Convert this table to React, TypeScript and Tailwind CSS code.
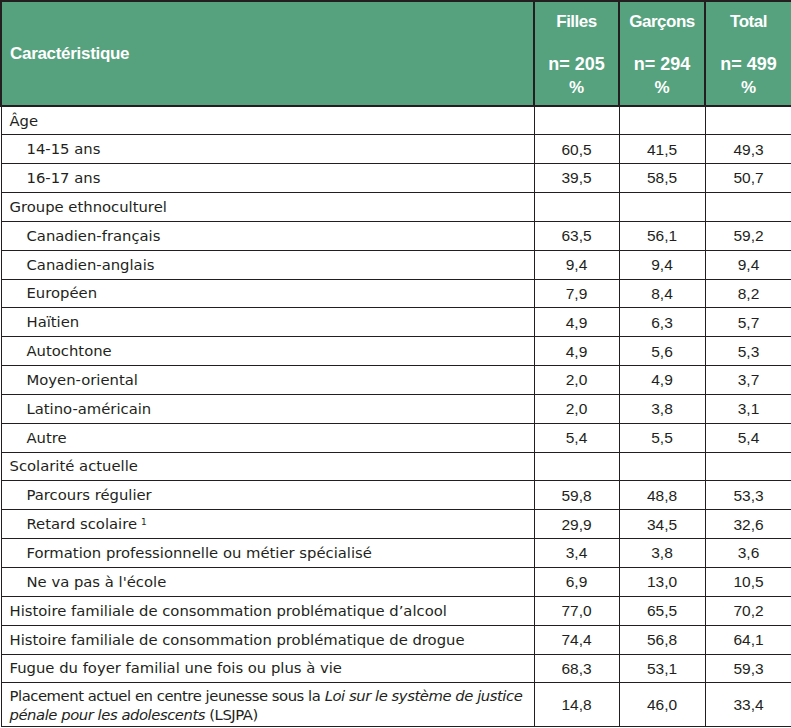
const rows: { label: string; f?: string; g?: string; t?: string; indent?: boolean; sup?: boolean }[] = [
  { label: 'Âge' },
  { label: '14-15 ans', f: '60,5', g: '41,5', t: '49,3', indent: true },
  { label: '16-17 ans', f: '39,5', g: '58,5', t: '50,7', indent: true },
  { label: 'Groupe ethnoculturel' },
  { label: 'Canadien-français', f: '63,5', g: '56,1', t: '59,2', indent: true },
  { label: 'Canadien-anglais', f: '9,4', g: '9,4', t: '9,4', indent: true },
  { label: 'Européen', f: '7,9', g: '8,4', t: '8,2', indent: true },
  { label: 'Haïtien', f: '4,9', g: '6,3', t: '5,7', indent: true },
  { label: 'Autochtone', f: '4,9', g: '5,6', t: '5,3', indent: true },
  { label: 'Moyen-oriental', f: '2,0', g: '4,9', t: '3,7', indent: true },
  { label: 'Latino-américain', f: '2,0', g: '3,8', t: '3,1', indent: true },
  { label: 'Autre', f: '5,4', g: '5,5', t: '5,4', indent: true },
  { label: 'Scolarité actuelle' },
  { label: 'Parcours régulier', f: '59,8', g: '48,8', t: '53,3', indent: true },
  { label: 'Retard scolaire', f: '29,9', g: '34,5', t: '32,6', indent: true, sup: true },
  { label: 'Formation professionnelle ou métier spécialisé', f: '3,4', g: '3,8', t: '3,6', indent: true },
  { label: "Ne va pas à l'école", f: '6,9', g: '13,0', t: '10,5', indent: true },
  { label: 'Histoire familiale de consommation problématique d’alcool', f: '77,0', g: '65,5', t: '70,2' },
  { label: 'Histoire familiale de consommation problématique de drogue', f: '74,4', g: '56,8', t: '64,1' },
  { label: 'Fugue du foyer familial une fois ou plus à vie', f: '68,3', g: '53,1', t: '59,3' },
];

const cols = [
  { name: 'Filles', n: '205' },
  { name: 'Garçons', n: '294' },
  { name: 'Total', n: '499' },
];

const label = '"DejaVu Sans", Verdana, sans-serif';

export default function App() {
  return (
    <div className="w-[791px] h-[728px] bg-white" style={{ fontFamily: '"Liberation Sans", Arial, sans-serif' }}>
      <table className="w-[791px] border-collapse table-fixed text-[15.5px] text-[#231f20]">
        <colgroup>
          <col className="w-[533px]" />
          <col className="w-[85px]" />
          <col className="w-[86px]" />
          <col className="w-[87px]" />
        </colgroup>
        <thead>
          <tr className="h-[105px] bg-[#56a17e] text-white">
            <th className="border-2 border-[#231f20] text-left align-middle pl-2 text-[17px] font-bold tracking-[-0.3px]">
              Caractéristique
            </th>
            {cols.map((c) => (
              <th key={c.name} className="border-2 border-[#231f20] text-center align-top pt-[8px] font-bold">
                <div className="leading-[24px] text-[17px] tracking-[-0.5px]">{c.name}</div>
                <div className="leading-[24px] mt-[18px] text-[18px]">n= {c.n}</div>
                <div className="leading-[24px] text-[17px]">%</div>
              </th>
            ))}
          </tr>
        </thead>
        <tbody>
          {rows.map((r) => (
            <tr key={r.label} className="h-[28.85px]">
              <td
                className={`border border-[#231f20] text-[14.8px] ${r.indent ? 'pl-[25px]' : 'pl-2'}`}
                style={{ fontFamily: label }}
              >
                {r.label}
                {r.sup && <sup className="text-[9px] ml-1">1</sup>}
              </td>
              <td className="border border-[#231f20] text-center">{r.f}</td>
              <td className="border border-[#231f20] text-center">{r.g}</td>
              <td className="border border-[#231f20] text-center">{r.t}</td>
            </tr>
          ))}
          <tr className="h-[44px]">
            <td className="border border-[#231f20] pl-2 leading-[19px] text-[14.8px] tracking-[-0.45px] whitespace-nowrap overflow-hidden" style={{ fontFamily: label }}>
              Placement actuel en centre jeunesse sous la <i>Loi sur le système de justice</i>
              <br />
              <i>pénale pour les adolescents</i> (LSJPA)
            </td>
            <td className="border border-[#231f20] text-center">14,8</td>
            <td className="border border-[#231f20] text-center">46,0</td>
            <td className="border border-[#231f20] text-center">33,4</td>
          </tr>
        </tbody>
      </table>
    </div>
  );
}
